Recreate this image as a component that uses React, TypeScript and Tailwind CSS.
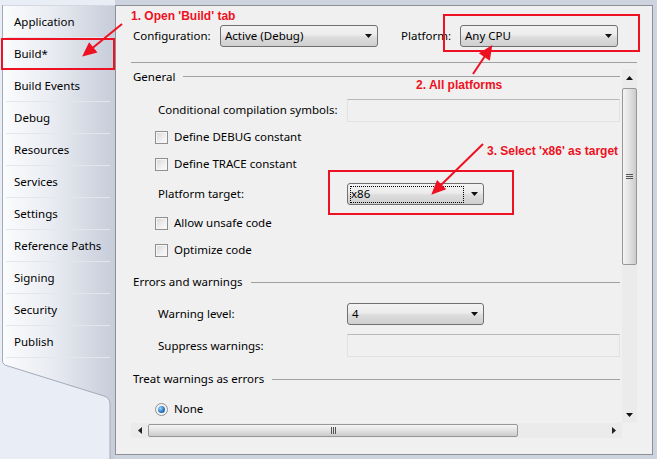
import React from 'react';

const tabs = [
  'Application',
  'Build*',
  'Build Events',
  'Debug',
  'Resources',
  'Services',
  'Settings',
  'Reference Paths',
  'Signing',
  'Security',
  'Publish',
];

const Tri = ({ dir }: { dir: 'up' | 'down' | 'left' | 'right' }) => {
  // tiny black triangles used by combo boxes and scroll bars
  if (dir === 'left' || dir === 'right') {
    return (
      <svg width="4" height="7" viewBox="0 0 4 7">
        <polygon points={dir === 'left' ? '4,0 4,7 0,3.5' : '0,0 0,7 4,3.5'} fill="#222" />
      </svg>
    );
  }
  return (
    <svg width="7" height="4" viewBox="0 0 7 4">
      <polygon points={dir === 'down' ? '0,0 7,0 3.5,4' : '0,4 7,4 3.5,0'} fill="#111" />
    </svg>
  );
};

const Combo = ({ value, w, focus }: { value: string; w: string; focus?: boolean }) => (
  <div
    className={`${w} h-[22px] flex items-center rounded-[3px] border border-[#707070] bg-[linear-gradient(to_bottom,#f3f3f3,#ebebeb_45%,#dddddd_55%,#cfcfcf)] pr-[5px]`}
  >
    {focus ? (
      <div className="ml-[2px] w-[114px] h-[17px] flex items-center border border-dotted border-black leading-none">
        {value}
      </div>
    ) : (
      <div className="pl-[4px] leading-none">{value}</div>
    )}
    <div className="flex-1" />
    <Tri dir="down" />
  </div>
);

const Check = ({ label }: { label: string }) => (
  <div className="flex items-center pl-[24px] gap-[6px]">
    <span className="w-[13px] h-[13px] border border-[#8f8f8f] bg-[linear-gradient(135deg,#d6d6d6,#f0f0f0_60%,#fbfbfb)] shadow-[inset_0_0_0_1px_#f6f6f6]" />
    <span>{label}</span>
  </div>
);

const TextBox = () => (
  <div className="w-[273px] h-[23px] border border-[#e2e2e2] border-t-[#b9b9b9] bg-[#f0f0f0]" />
);

const Section = ({ title }: { title: string }) => (
  <div className="flex items-center gap-[8px] pl-[2px] pr-[2px] h-full">
    <span className="leading-none">{title}</span>
    <div className="flex-1 h-px bg-[#a0a0a0]" />
  </div>
);

const Label = ({ text }: { text: string }) => (
  <span className="w-[189px] shrink-0">{text}</span>
);

export default function App() {
  return (
    <div className="relative w-[657px] h-[459px] overflow-hidden flex bg-[#e9eef6] font-['Noto_Sans',sans-serif] text-[11.5px] text-black">
      {/* tab strip */}
      <div className="w-[115px] shrink-0 flex flex-col pt-[5px]">
        <div className="ml-[2px] flex flex-col border-l border-[#a3abba] bg-[linear-gradient(to_right,#fbfcfd,#e8ebf1_45%,#c6ccd9)]">
          <div className="h-px bg-[#d4d8e1]" />
          {tabs.map((t) => (
            <div key={t} className="h-[32px] flex flex-col">
              <div className="flex-1 flex items-center pl-[11px]">{t}</div>
              <div className="h-px ml-[3px] w-[104px] bg-[#e3e6ec]" />
            </div>
          ))}
        </div>
        <svg width="115" height="101" viewBox="0 0 115 101" className="block">
          <defs>
            <linearGradient id="tabg" x1="0" x2="1" y1="0" y2="0">
              <stop offset="0" stopColor="#fbfcfd" />
              <stop offset="0.45" stopColor="#e8ebf1" />
              <stop offset="1" stopColor="#c6ccd9" />
            </linearGradient>
          </defs>
          <path d="M2,0 L2,3 Q2,7 8,8 L104,38 Q110,40 110,46 L110,101 L115,101 L115,0 Z" fill="url(#tabg)" />
          <path d="M2.5,0 L2.5,3 Q2.5,7 8,8 L104,38 Q110,40 110,46 L110,101" fill="none" stroke="#a3abba" />
        </svg>
      </div>

      {/* property page */}
      <div className="flex-1 bg-[#cdd3df] pt-[5px] pr-[4px] pb-[4px]">
        <div className="w-[538px] h-[450px] border border-[#8e9096] bg-[#f0f0f0] flex flex-col px-[15px]">
          <div className="h-[56px] pt-[4px] flex items-center">
            <span className="w-[89px] pl-[2px] shrink-0">Configuration:</span>
            <Combo value="Active (Debug)" w="w-[158px]" />
            <span className="ml-[23px] w-[59px] shrink-0">Platform:</span>
            <Combo value="Any CPU" w="w-[158px]" />
          </div>
          <div className="h-px bg-[#a0a0a0]" />
          <div className="mt-[6px] h-[369px] flex flex-col">
            <div className="h-[354px] flex">
              <div className="flex-1 flex flex-col overflow-hidden">
                <div className="h-[15px]">
                  <Section title="General" />
                </div>
                <div className="h-[14px]" />
                <div className="h-[24px] flex items-center pl-[27px]">
                  <Label text="Conditional compilation symbols:" />
                  <TextBox />
                </div>
                <div className="h-[30px] flex items-center">
                  <Check label="Define DEBUG constant" />
                </div>
                <div className="h-[24px] flex items-center">
                  <Check label="Define TRACE constant" />
                </div>
                <div className="h-[36px] flex items-center pl-[27px]">
                  <Label text="Platform target:" />
                  <Combo value="x86" w="w-[137px]" focus />
                </div>
                <div className="h-[22px] flex items-center">
                  <Check label="Allow unsafe code" />
                </div>
                <div className="h-[32px] flex items-center">
                  <Check label="Optimize code" />
                </div>
                <div className="h-[32px]">
                  <Section title="Errors and warnings" />
                </div>
                <div className="h-[32px] flex items-center pl-[27px]">
                  <Label text="Warning level:" />
                  <Combo value="4" w="w-[137px]" />
                </div>
                <div className="h-[31px] flex items-center pl-[27px]">
                  <Label text="Suppress warnings:" />
                  <TextBox />
                </div>
                <div className="h-[36px]">
                  <Section title="Treat warnings as errors" />
                </div>
                <div className="h-[24px] flex items-center pl-[24px] gap-[6px]">
                  <span className="w-[13px] h-[13px] rounded-full border border-[#8f8f8f] bg-[#f4f4f4] flex items-center justify-center">
                    <span className="w-[7px] h-[7px] rounded-full bg-[radial-gradient(circle_at_35%_35%,#9fd6ff,#2a78c4_55%,#0e3f78)]" />
                  </span>
                  <span>None</span>
                </div>
              </div>

              {/* vertical scroll bar */}
              <div className="w-[15px] flex flex-col bg-[#ebebeb]">
                <div className="h-[17px] flex items-center justify-center">
                  <Tri dir="up" />
                </div>
                <div className="mt-[2px] h-[177px] rounded-[2px] border border-[#979797] bg-[linear-gradient(to_right,#f4f4f4,#e2e2e2_50%,#cbcbcb)] flex flex-col items-center justify-center gap-[1px]">
                  <div className="w-[7px] h-px bg-[#555]" />
                  <div className="w-[7px] h-px bg-[#555]" />
                  <div className="w-[7px] h-px bg-[#555]" />
                </div>
                <div className="flex-1" />
                <div className="h-[17px] flex items-center justify-center">
                  <Tri dir="down" />
                </div>
              </div>
            </div>

            {/* horizontal scroll bar */}
            <div className="h-[15px] flex">
              <div className="w-[491px] flex bg-[#ebebeb]">
                <div className="w-[17px] flex items-center justify-center">
                  <Tri dir="left" />
                </div>
                <div className="my-[1px] w-[370px] rounded-[2px] border border-[#979797] bg-[linear-gradient(to_bottom,#f4f4f4,#e2e2e2_50%,#cbcbcb)] flex items-center justify-center gap-[1px]">
                  <div className="w-px h-[7px] bg-[#555]" />
                  <div className="w-px h-[7px] bg-[#555]" />
                  <div className="w-px h-[7px] bg-[#555]" />
                </div>
                <div className="flex-1" />
                <div className="w-[17px] flex items-center justify-center">
                  <Tri dir="right" />
                </div>
              </div>
              <div className="w-[15px] bg-[#f0f0f0]" />
            </div>
          </div>
        </div>
      </div>

      {/* red annotations laid over the screenshot */}
      <div className="absolute inset-0 pointer-events-none font-['Liberation_Sans',Arial,sans-serif] text-[12px] font-bold leading-[16px] text-[#ee1122]">
        <span className="absolute left-[131px] top-[8px]">1. Open 'Build' tab</span>
        <span className="absolute left-[416px] top-[77px]">2. All platforms</span>
        <span className="absolute left-[487px] top-[143px]">3. Select 'x86' as target</span>
        <div className="absolute left-[1px] top-[38px] w-[114px] h-[32px] border-2 border-[#ee1122]" />
        <div className="absolute left-[443px] top-[14px] w-[197px] h-[38px] border-2 border-[#ee1122]" />
        <div className="absolute left-[328px] top-[170px] w-[186px] h-[45px] border-2 border-[#ee1122]" />
        <svg width="657" height="459" viewBox="0 0 657 459" className="absolute left-0 top-0">
          <g stroke="#ee1122" strokeWidth="2" fill="#ee1122">
            <line x1="122" y1="24" x2="92.5" y2="48" />
            <polygon points="84,55 95.7,51.9 89.3,44.1" />
            <line x1="473" y1="74" x2="485" y2="56" />
            <polygon points="491,47 489.1,59 480.7,53.4" />
            <line x1="483" y1="144" x2="441" y2="185" />
            <polygon points="433,193 444.4,188.9 437.4,181.7" />
          </g>
        </svg>
      </div>
    </div>
  );
}
